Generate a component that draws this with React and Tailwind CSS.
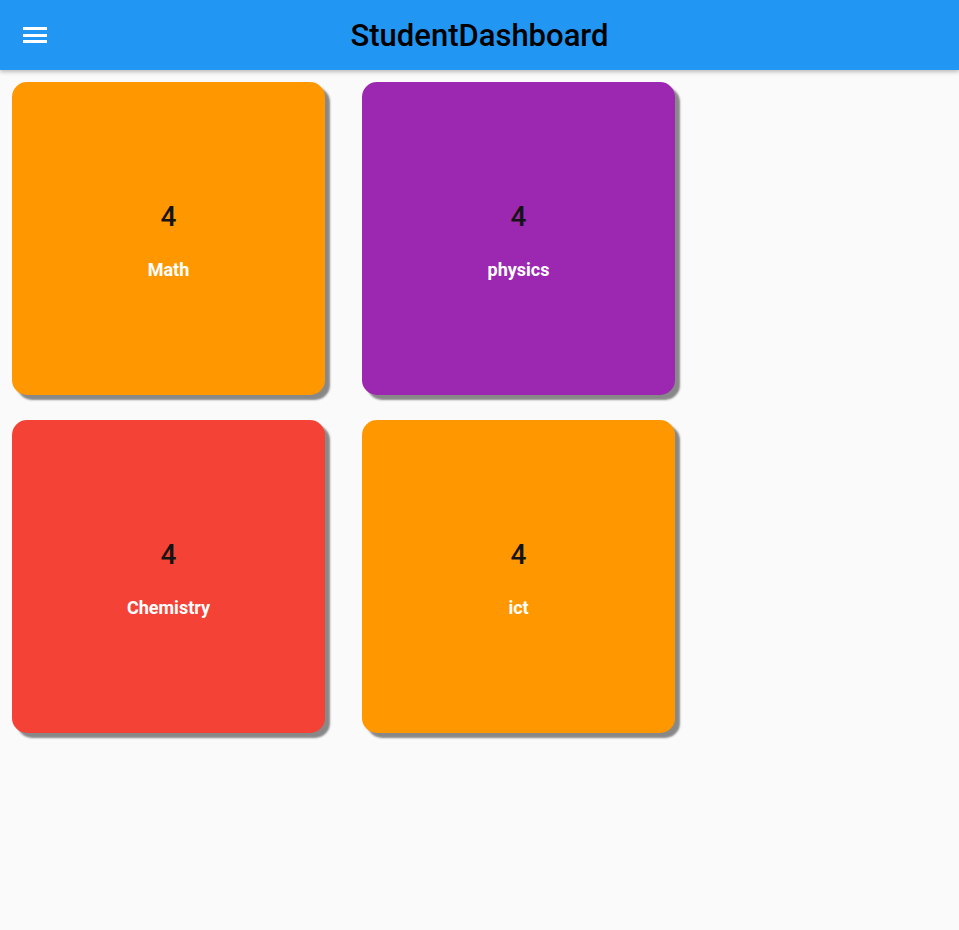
export default function App() {
  const subjects = [
    { name: "Math", count: 4, color: "bg-[#ff9800]" },
    { name: "physics", count: 4, color: "bg-[#9c27b0]" },
    { name: "Chemistry", count: 4, color: "bg-[#f44336]" },
    { name: "ict", count: 4, color: "bg-[#ff9800]" }
  ];

  return (
    <div className="min-h-[930px] bg-[#fafafa] font-['Roboto',sans-serif]">
      {/* App bar */}
      <div className="h-[70px] bg-[#2196f3] flex items-center relative shadow-[0_2px_4px_rgba(0,0,0,0.25)]">
        <button className="absolute left-[23px] top-[27px] flex flex-col gap-[3.5px]">
          <span className="block w-[24px] h-[3px] bg-white"></span>
          <span className="block w-[24px] h-[3px] bg-white"></span>
          <span className="block w-[24px] h-[3px] bg-white"></span>
        </button>
        <h1 className="flex-1 text-center text-[31px] font-medium text-black leading-none">
          StudentDashboard
        </h1>
      </div>

      {/* Cards */}
      <div className="grid grid-cols-[313px_313px] gap-x-[37px] gap-y-[25px] pl-[12px] pt-[12px]">
        {subjects.map(s => (
          <div
            key={s.name}
            className={`${s.color} h-[313px] rounded-[15px] shadow-[5px_5px_2px_#888888] flex flex-col items-center justify-center pt-[4px]`}
          >
            <div className="text-[28px] font-medium text-[#141414] leading-none">{s.count}</div>
            <div className="text-[18px] font-bold text-white mt-[30px] leading-none">{s.name}</div>
          </div>
        ))}
      </div>
    </div>
  );
}
